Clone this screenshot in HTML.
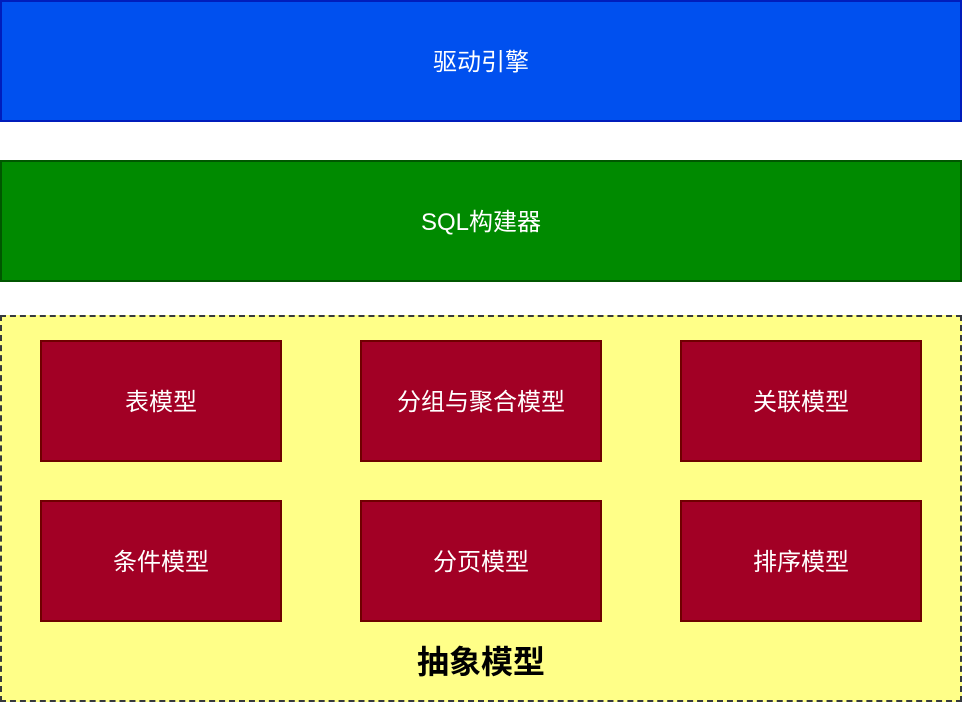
<!DOCTYPE html>
<html><head><meta charset="utf-8"><style>
body{margin:0;width:962px;height:702px;background:#fff;position:relative;overflow:hidden;font-family:"Liberation Sans","Noto Sans CJK SC",sans-serif}
.b{position:absolute;box-sizing:border-box;display:flex;align-items:center;justify-content:center;color:#fff;font-size:24px;padding-bottom:3px}
.r{background:#a20025;border:2px solid #6f0000;width:242px;height:122px}
</style></head><body>
<div class="b" style="left:0;top:0;width:962px;height:122px;background:#0050ef;border:2px solid #001dbc">驱动引擎</div>
<div class="b" style="left:0;top:160px;width:962px;height:122px;background:#008a00;border:2px solid #005700">SQL构建器</div>
<div style="position:absolute;left:0;top:315px;width:962px;height:387px;box-sizing:border-box;background:#ffff88;border:2px dashed #36393d"></div>
<div class="b r" style="left:40px;top:340px">表模型</div>
<div class="b r" style="left:360px;top:340px">分组与聚合模型</div>
<div class="b r" style="left:680px;top:340px">关联模型</div>
<div class="b r" style="left:40px;top:500px">条件模型</div>
<div class="b r" style="left:360px;top:500px">分页模型</div>
<div class="b r" style="left:680px;top:500px">排序模型</div>
<div class="b" style="left:330px;top:638px;width:302px;height:46px;color:#000;font-weight:bold;font-size:32px">抽象模型</div>
</body></html>
